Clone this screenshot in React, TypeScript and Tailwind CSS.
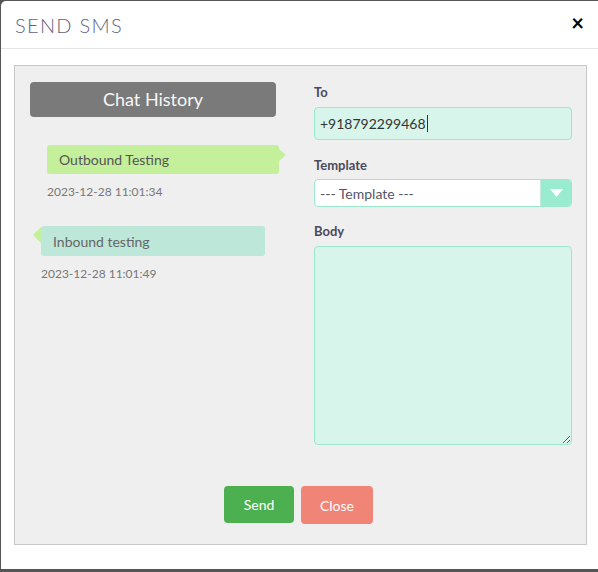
import React from "react";

export default function App() {
  return (
    <div
      className="w-[598px] h-[572px] overflow-hidden bg-[#555555] pt-px pl-px"
      style={{ fontFamily: "Lato, 'Open Sans', sans-serif" }}
    >
      <div className="w-[598px] h-[568px] bg-white rounded-tl-[5px] flex flex-col">
        {/* Header */}
        <div className="h-[48px] shrink-0 border-b border-[#e5e5e5] flex items-center justify-between pl-[14px] pr-[15px]">
          <div className="text-[20px] font-light tracking-[1.3px] text-[#62627a] leading-none mt-[1px]">
            SEND SMS
          </div>
          <div className="text-[22px] font-bold text-black leading-none -mt-[3px]">×</div>
        </div>

        {/* Body */}
        <div className="pl-[13px] pt-[16px]">
          <div className="w-[573px] h-[480px] border border-[#c8c8c8] bg-[#efefef] flex flex-col">
            <div className="flex pt-[16px]">
              {/* Left column */}
              <div className="ml-[15px] w-[246px] flex flex-col">
                <div className="h-[35px] rounded-[4px] bg-[#7a7a7a] text-[18px] text-[#f7f7f7] flex items-center justify-center">
                  Chat History
                </div>

                <div className="relative mt-[28px] ml-[17px] w-[232px] h-[29px] rounded-[3px] bg-[#c4ef9b] flex items-center pl-[12px] text-[14px] text-[#555555]">
                  Outbound Testing
                  <span className="absolute right-[-7px] top-[4px] w-0 h-0 border-y-[6px] border-y-transparent border-l-[7px] border-l-[#c4ef9b]" />
                </div>
                <div className="ml-[17px] mt-[10px] text-[12px] leading-[16px] text-[#777777]">
                  2023-12-28 11:01:34
                </div>

                <div className="relative mt-[26px] ml-[11px] w-[224px] h-[30px] rounded-[3px] bg-[#bde7d8] flex items-center pl-[12px] text-[14px] text-[#666666]">
                  Inbound testing
                  <span className="absolute left-[-8px] top-[1px] w-0 h-0 border-y-[8px] border-y-transparent border-r-[8px] border-r-[#c4ef9b]" />
                </div>
                <div className="ml-[11px] mt-[10px] text-[12px] leading-[16px] text-[#777777]">
                  2023-12-28 11:01:49
                </div>
              </div>

              {/* Right column */}
              <div className="ml-[38px] w-[258px] flex flex-col pt-px">
                <div className="text-[13px] leading-[18px] font-bold text-[#4a4a5c]">To</div>
                <div className="mt-[6px] h-[33px] rounded-[4px] border border-[#9be8cd] bg-[#d8f5ec] flex items-center pl-[5px] text-[14px] text-[#333333]">
                  +918792299468
                  <span className="inline-block w-px h-[17px] bg-[#333333] ml-px" />
                </div>

                <div className="mt-[16px] text-[13px] leading-[18px] font-bold text-[#4a4a5c]">Template</div>
                <div className="mt-[5px] h-[28px] rounded-[4px] border border-[#9be8cd] bg-white flex overflow-hidden">
                  <div className="flex-1 flex items-center pl-[5px] text-[14px] text-[#555566]">
                    --- Template ---
                  </div>
                  <div className="w-[31px] border-l border-[#c8e8dd] bg-[#9aecd0] flex items-center justify-center">
                    <svg width="13" height="9" viewBox="0 0 13 9">
                      <polygon points="0,0 13,0 6.5,8" fill="#ffffff" />
                    </svg>
                  </div>
                </div>

                <div className="mt-[15px] text-[13px] leading-[18px] font-bold text-[#4a4a5c]">Body</div>
                <textarea
                  className="mt-[6px] h-[199px] rounded-[4px] border border-[#9be8cd] bg-[#d8f5ec] outline-none"
                  defaultValue=""
                />
              </div>
            </div>

            {/* Buttons */}
            <div className="mt-[41px] flex justify-center gap-[7px] pr-[4px]">
              <button className="w-[70px] h-[37px] rounded-[4px] bg-[#4caf50] text-white text-[14px]">
                Send
              </button>
              <button className="w-[72px] h-[38px] rounded-[4px] bg-[#f08477] text-white text-[14px]">
                Close
              </button>
            </div>
          </div>
        </div>
      </div>
    </div>
  );
}
